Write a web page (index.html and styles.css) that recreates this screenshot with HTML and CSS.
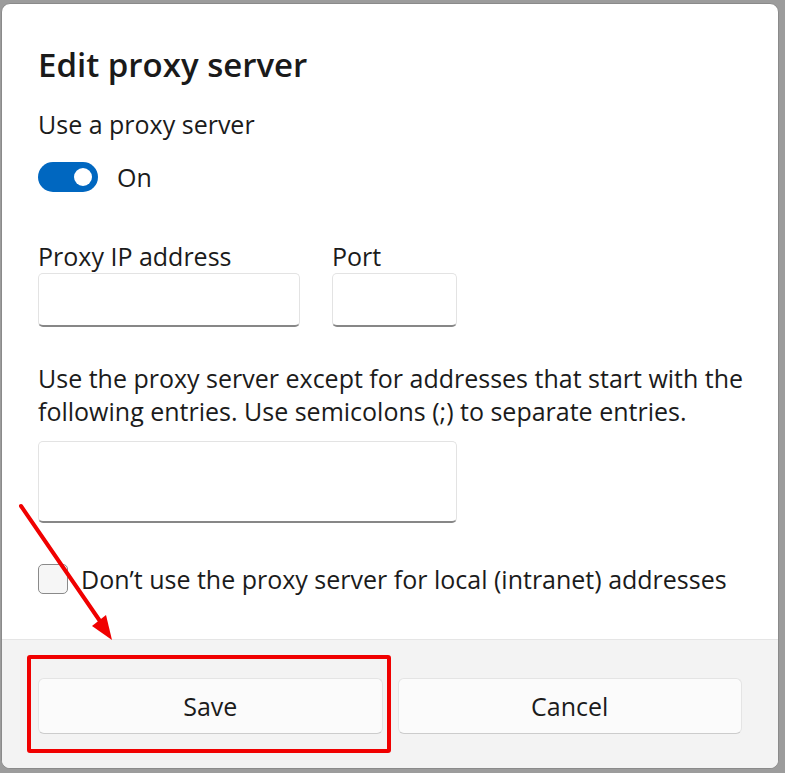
FILE: index.html
```html
<!DOCTYPE html>
<html lang="en">
<head>
<meta charset="utf-8">
<title>Edit proxy server</title>
<link rel="stylesheet" href="styles.css">
</head>
<body>
<div class="dialog">
  <div class="content">
    <h1 class="title">Edit proxy server</h1>
    <div class="label">Use a proxy server</div>
    <div class="toggle-row">
      <span class="toggle"><span class="knob"></span></span>
      <span class="toggle-text">On</span>
    </div>
    <div class="fields">
      <div class="field">
        <div class="label">Proxy IP address</div>
        <div class="input input-ip"></div>
      </div>
      <div class="field">
        <div class="label">Port</div>
        <div class="input input-port"></div>
      </div>
    </div>
    <p class="desc">Use the proxy server except for addresses that start with the following entries. Use semicolons (;) to separate entries.</p>
    <div class="input input-exc"></div>
    <div class="check-row">
      <span class="checkbox"></span>
      <span class="check-text">Don’t use the proxy server for local (intranet) addresses</span>
    </div>
  </div>
  <div class="footer">
    <button class="btn">Save</button>
    <button class="btn">Cancel</button>
  </div>
</div>
<svg class="annot" width="785" height="773" viewBox="0 0 785 773" aria-hidden="true">
  <line x1="21" y1="506" x2="102" y2="624" stroke="#f00000" stroke-width="4" stroke-linecap="round"/>
  <polygon points="112,640 92,626 106,615" fill="#f00000"/>
  <rect x="29" y="657" width="360" height="94" fill="none" stroke="#f00000" stroke-width="4" rx="1"/>
</svg>
</body>
</html>
```
FILE: styles.css
```css
html, body {
  margin: 0;
  padding: 0;
}
body {
  width: 785px;
  height: 773px;
  background: #9c9c9c;
  font-family: "Open Sans", "Noto Sans", sans-serif;
  color: #1b1b1b;
  position: relative;
  overflow: hidden;
}
.dialog {
  box-sizing: border-box;
  margin: 3px 0 0 1px;
  width: 778px;
  height: 766px;
  background: #ffffff;
  border: 1px solid #8a8a8a;
  border-radius: 9px;
  display: flex;
  flex-direction: column;
  overflow: hidden;
}
.content {
  flex: 1;
  padding: 41px 36px 0 36px;
}
.title {
  margin: 0;
  font-size: 33px;
  font-weight: 600;
  line-height: 40px;
  color: #1a1a1a;
}
.label {
  font-size: 25px;
  line-height: 30px;
}
.content > .label {
  margin-top: 24px;
}
.toggle-row {
  display: flex;
  align-items: center;
  gap: 19px;
  margin-top: 23px;
  height: 30px;
}
.toggle {
  box-sizing: border-box;
  width: 60px;
  height: 30px;
  border-radius: 15px;
  background: #0067c0;
  display: flex;
  align-items: center;
  justify-content: flex-end;
  padding-right: 6px;
}
.knob {
  width: 18px;
  height: 18px;
  border-radius: 50%;
  background: #ffffff;
}
.toggle-text {
  font-size: 25px;
  line-height: 30px;
}
.fields {
  display: flex;
  gap: 32px;
  margin-top: 49px;
}
.field .label {
  margin-bottom: 2px;
}
.input {
  box-sizing: border-box;
  background: #ffffff;
  border: 1px solid #e3e3e3;
  border-bottom: 2px solid #878787;
  border-radius: 5px;
}
.input-ip {
  width: 262px;
  height: 54px;
}
.input-port {
  width: 125px;
  height: 54px;
}
.desc {
  margin: 35px 0 13px 0;
  font-size: 25px;
  line-height: 33px;
  width: 712px;
}
.input-exc {
  width: 419px;
  height: 82px;
}
.check-row {
  display: flex;
  align-items: center;
  gap: 13px;
  margin-top: 41px;
}
.checkbox {
  box-sizing: border-box;
  width: 30px;
  height: 30px;
  border: 1px solid #8a8a8a;
  border-radius: 5px;
  background: #f6f6f6;
  flex: none;
}
.check-text {
  font-size: 25px;
  line-height: 30px;
  white-space: nowrap;
}
.footer {
  height: 129px;
  box-sizing: border-box;
  border-top: 1px solid #e5e5e5;
  background: #f3f3f3;
  display: flex;
  gap: 15px;
  padding: 38px 36px 0 36px;
}
.btn {
  box-sizing: border-box;
  width: 345px;
  height: 56px;
  background: #fbfbfb;
  border: 1px solid #e4e4e4;
  border-bottom-color: #cccccc;
  border-radius: 6px;
  font-family: "Open Sans", "Noto Sans", sans-serif;
  font-size: 25px;
  color: #1b1b1b;
  padding: 0;
}
.annot {
  position: absolute;
  left: 0;
  top: 0;
  pointer-events: none;
}
```
